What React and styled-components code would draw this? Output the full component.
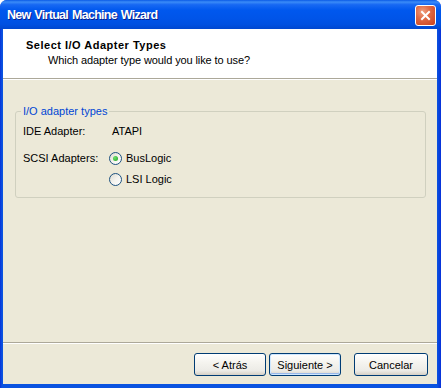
import styled, { createGlobalStyle } from "styled-components";

const Global = createGlobalStyle`
  html, body {
    margin: 0;
    padding: 0;
    background: #ffffff;
  }
`;

const Window = styled.div`
  width: 441px;
  height: 388px;
  display: flex;
  flex-direction: column;
  background: linear-gradient(90deg, #0831d9 0px, #0a53e0 2px, #0a53e0 437px, #0831d9 441px);
  border-radius: 7px 7px 0 0;
  overflow: hidden;
  font-family: "Liberation Sans", Arial, sans-serif;
  font-size: 11px;
  color: #000;
`;

const TitleBar = styled.div`
  height: 29px;
  flex: none;
  display: flex;
  align-items: center;
  justify-content: space-between;
  padding: 0 5px 0 7px;
  box-sizing: border-box;
  background: linear-gradient(
    180deg,
    #0a5ae6 0%,
    #3b8cf7 7%,
    #1869f3 16%,
    #0058ee 35%,
    #0054e8 65%,
    #0050e0 85%,
    #0047cf 100%
  );
`;

const Caption = styled.span`
  color: #fff;
  font-weight: bold;
  font-size: 12.5px;
  letter-spacing: -0.7px;
  word-spacing: 1px;
  text-shadow: 1px 1px 0 #0a1f8c;
`;

const CloseButton = styled.div`
  width: 21px;
  height: 21px;
  box-sizing: border-box;
  border: 1px solid #fff;
  border-radius: 3px;
  background: radial-gradient(circle at 35% 30%, #f0a080 0%, #e06a45 40%, #c8401c 100%);
  display: flex;
  align-items: center;
  justify-content: center;
  margin-top: 2px;
`;

const Body = styled.div`
  flex: 1;
  margin: 0 4px 4px 3px;
  display: flex;
  flex-direction: column;
  background: #ece9d8;
`;

const Header = styled.div`
  height: 50px;
  flex: none;
  box-sizing: border-box;
  background: #fff;
  border-bottom: 1px solid #aca899;
  box-shadow: 0 1px 0 #fff;
  padding: 10px 0 0 23px;
`;

const HeaderTitle = styled.div`
  font-weight: bold;
  line-height: 13px;
  letter-spacing: 0.5px;
`;

const HeaderSub = styled.div`
  line-height: 13px;
  margin: 2px 0 0 22px;
  letter-spacing: -0.1px;
`;

const Content = styled.div`
  flex: 1;
  padding: 26px 11px 0 12px;
`;

const GroupBox = styled.fieldset`
  margin: 0;
  padding: 0 7px 10px 7px;
  border: 1px solid #d0d0bf;
  border-radius: 3px;
`;

const Legend = styled.legend`
  color: #0046d5;
  line-height: 13px;
  padding: 0 2px;
  margin-left: -2px;
`;

const Grid = styled.div`
  display: grid;
  grid-template-columns: 86px 1fr;
  margin-top: 5px;
`;

const Label = styled.div`
  height: 16px;
  line-height: 16px;
  margin-bottom: ${(p) => p.$gap || 0}px;
`;

const Value = styled.div`
  height: 16px;
  line-height: 16px;
  padding-left: ${(p) => p.$indent || 0}px;
  margin-bottom: ${(p) => p.$gap || 0}px;
  display: flex;
  align-items: center;
`;

const Radio = styled.span`
  width: 13px;
  height: 13px;
  box-sizing: border-box;
  border: 1px solid #1c5180;
  border-radius: 50%;
  background: linear-gradient(135deg, #dcdad0 0%, #f4f3ee 50%, #ffffff 100%);
  display: inline-flex;
  align-items: center;
  justify-content: center;
  margin-right: 4px;
  &::after {
    content: "";
    width: 5px;
    height: 5px;
    border-radius: 50%;
    background: radial-gradient(circle at 35% 35%, #6ee06e, #21a121);
    display: ${(p) => (p.$checked ? "block" : "none")};
  }
`;

const Footer = styled.div`
  flex: none;
  height: 42px;
  box-sizing: border-box;
  border-top: 1px solid #aca899;
  box-shadow: inset 0 1px 0 #fff;
  display: flex;
  justify-content: flex-end;
  align-items: flex-start;
  padding: 10px 9px 0 0;
`;

const Button = styled.div`
  width: ${(p) => p.$w || 72}px;
  height: 23px;
  box-sizing: border-box;
  border: 1px solid #003c74;
  border-radius: 3px;
  background: linear-gradient(180deg, #ffffff 0%, #f5f4ef 40%, #ecebe6 80%, #d6d0c5 100%);
  display: flex;
  align-items: center;
  justify-content: center;
  margin-left: ${(p) => p.$ml || 0}px;
  box-shadow: ${(p) => (p.$default ? "inset 0 0 0 1px #cee7ff, inset 0 -1px 0 1px #98b8ea" : "none")};
`;

export default function App() {
  return (
    <>
      <Global />
      <Window>
        <TitleBar>
          <Caption>New Virtual Machine Wizard</Caption>
          <CloseButton>
            <svg width="11" height="11" viewBox="0 0 11 11">
              <path d="M2 2 L9 9 M9 2 L2 9" stroke="#fff" strokeWidth="2" strokeLinecap="square" />
            </svg>
          </CloseButton>
        </TitleBar>
        <Body>
          <Header>
            <HeaderTitle>Select I/O Adapter Types</HeaderTitle>
            <HeaderSub>Which adapter type would you like to use?</HeaderSub>
          </Header>
          <Content>
            <GroupBox>
              <Legend>I/O adapter types</Legend>
              <Grid>
                <Label $gap={11}>IDE Adapter:</Label>
                <Value $indent={3} $gap={11}>ATAPI</Value>
                <Label $gap={5}>SCSI Adapters:</Label>
                <Value $gap={5}>
                  <Radio $checked />
                  BusLogic
                </Value>
                <Label />
                <Value>
                  <Radio />
                  LSI Logic
                </Value>
              </Grid>
            </GroupBox>
          </Content>
          <Footer>
            <Button>&lt; Atrás</Button>
            <Button $ml={3} $default>Siguiente &gt;</Button>
            <Button $ml={13} $w={74}>Cancelar</Button>
          </Footer>
        </Body>
      </Window>
    </>
  );
}
